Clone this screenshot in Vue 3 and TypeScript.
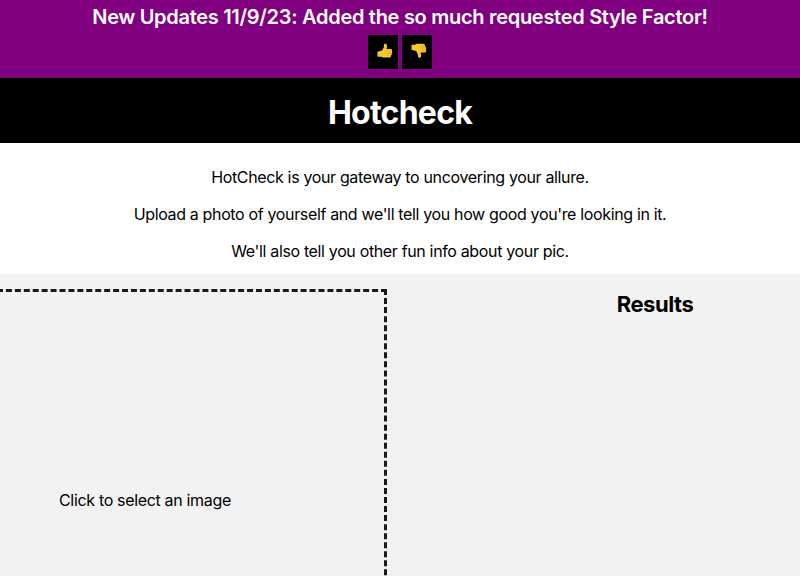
<script setup lang="ts">
const paragraphs: string[] = [
  'HotCheck is your gateway to uncovering your allure.',
  "Upload a photo of yourself and we'll tell you how good you're looking in it.",
  "We'll also tell you other fun info about your pic.",
]
</script>

<template>
  <div class="page">
    <section class="banner">
      <div class="news">New Updates 11/9/23: Added the so much requested Style Factor!</div>
      <div class="votes">
        <button class="vote" aria-label="thumbs up">
          <svg width="16" height="16" viewBox="0 0 16 16">
            <path d="M.5 8.700 5 7.500 6.800 4.500 7 1.500Q7.400.4 8.900.8 10.500 1.500 10 4L9.600 6H14Q15.600 6.500 15.100 8 15.600 9.500 14.800 10.300 15 11.800 14.100 12.400 14.100 14.400 12.500 14.600H6.500Q4.800 14.400 4.200 13.700H.5Z" fill="#f8c630"/>
            <path d="M9.800 8.300H14.600M9.800 10.400H14.400M9.800 12.400H13.800" stroke="#e5a021" stroke-width=".7" fill="none"/>
          </svg>
        </button>
        <button class="vote" aria-label="thumbs down">
          <svg width="16" height="16" viewBox="0 0 16 16">
            <g transform="matrix(1 0 0 -1 0 15.400)">
              <path d="M.5 8.700 5 7.500 6.800 4.500 7 1.500Q7.400.4 8.900.8 10.500 1.500 10 4L9.600 6H14Q15.600 6.500 15.100 8 15.600 9.500 14.800 10.300 15 11.800 14.100 12.400 14.100 14.400 12.500 14.600H6.500Q4.800 14.400 4.200 13.700H.5Z" fill="#f8c630"/>
              <path d="M9.800 8.300H14.600M9.800 10.400H14.400M9.800 12.400H13.800" stroke="#e5a021" stroke-width=".7" fill="none"/>
            </g>
          </svg>
        </button>
      </div>
    </section>

    <header class="title-bar">
      <h1>Hotcheck</h1>
    </header>

    <section class="intro">
      <p v-for="text in paragraphs" :key="text">{{ text }}</p>
    </section>

    <main class="workspace">
      <div class="dropzone">Click to select an image</div>
      <div class="results">
        <h2>Results</h2>
      </div>
    </main>
  </div>
</template>

<style>
html, body {
  margin: 0;
  overflow: hidden;
  height: 576px;
}
</style>

<style scoped>
.page {
  width: 800px;
  height: 576px;
  overflow: hidden;
  font-family: Inter, "Liberation Sans", sans-serif;
  color: #000;
  background: #fff;
}
.banner {
  height: 78px;
  box-sizing: border-box;
  padding-top: 5px;
  background: #800080;
  color: #fff;
  text-align: center;
}
.news {
  font-size: 20px;
  line-height: 24px;
  font-weight: 600;
  letter-spacing: -0.29px;
}
.votes {
  display: flex;
  justify-content: center;
  gap: 4px;
  margin-top: 6px;
}
.vote {
  width: 30px;
  height: 34px;
  padding: 0;
  border: 0;
  background: #000;
  display: flex;
  align-items: center;
  justify-content: center;
}
.vote svg {
  margin: -2px 0 0 4px;
}
.title-bar {
  height: 65px;
  box-sizing: border-box;
  padding-top: 4px;
  background: #000;
  color: #fff;
  display: flex;
  align-items: center;
  justify-content: center;
}
h1 {
  margin: 0;
  font-size: 32px;
  font-weight: 700;
  letter-spacing: -0.75px;
}
.intro {
  height: 131px;
  box-sizing: border-box;
  padding-top: 24px;
  text-align: center;
  font-size: 16px;
  line-height: 21px;
  letter-spacing: -0.35px;
}
.intro p {
  margin: 0 0 16px;
}
.workspace {
  display: flex;
  height: 302px;
  background: #f2f2f2;
  padding-top: 15px;
  box-sizing: border-box;
}
.dropzone {
  flex: none;
  box-sizing: border-box;
  width: 390px;
  height: 422px;
  margin-left: -3px;
  border: 3px dashed #1a1a1a;
  display: flex;
  align-items: center;
  padding-left: 59px;
  font-size: 16px;
  letter-spacing: -0.33px;
}
.results {
  flex: 1;
  padding-left: 123px;
  text-align: center;
}
h2 {
  margin: 0;
  font-size: 22px;
  line-height: 30px;
  font-weight: 700;
  letter-spacing: -0.45px;
}
</style>
